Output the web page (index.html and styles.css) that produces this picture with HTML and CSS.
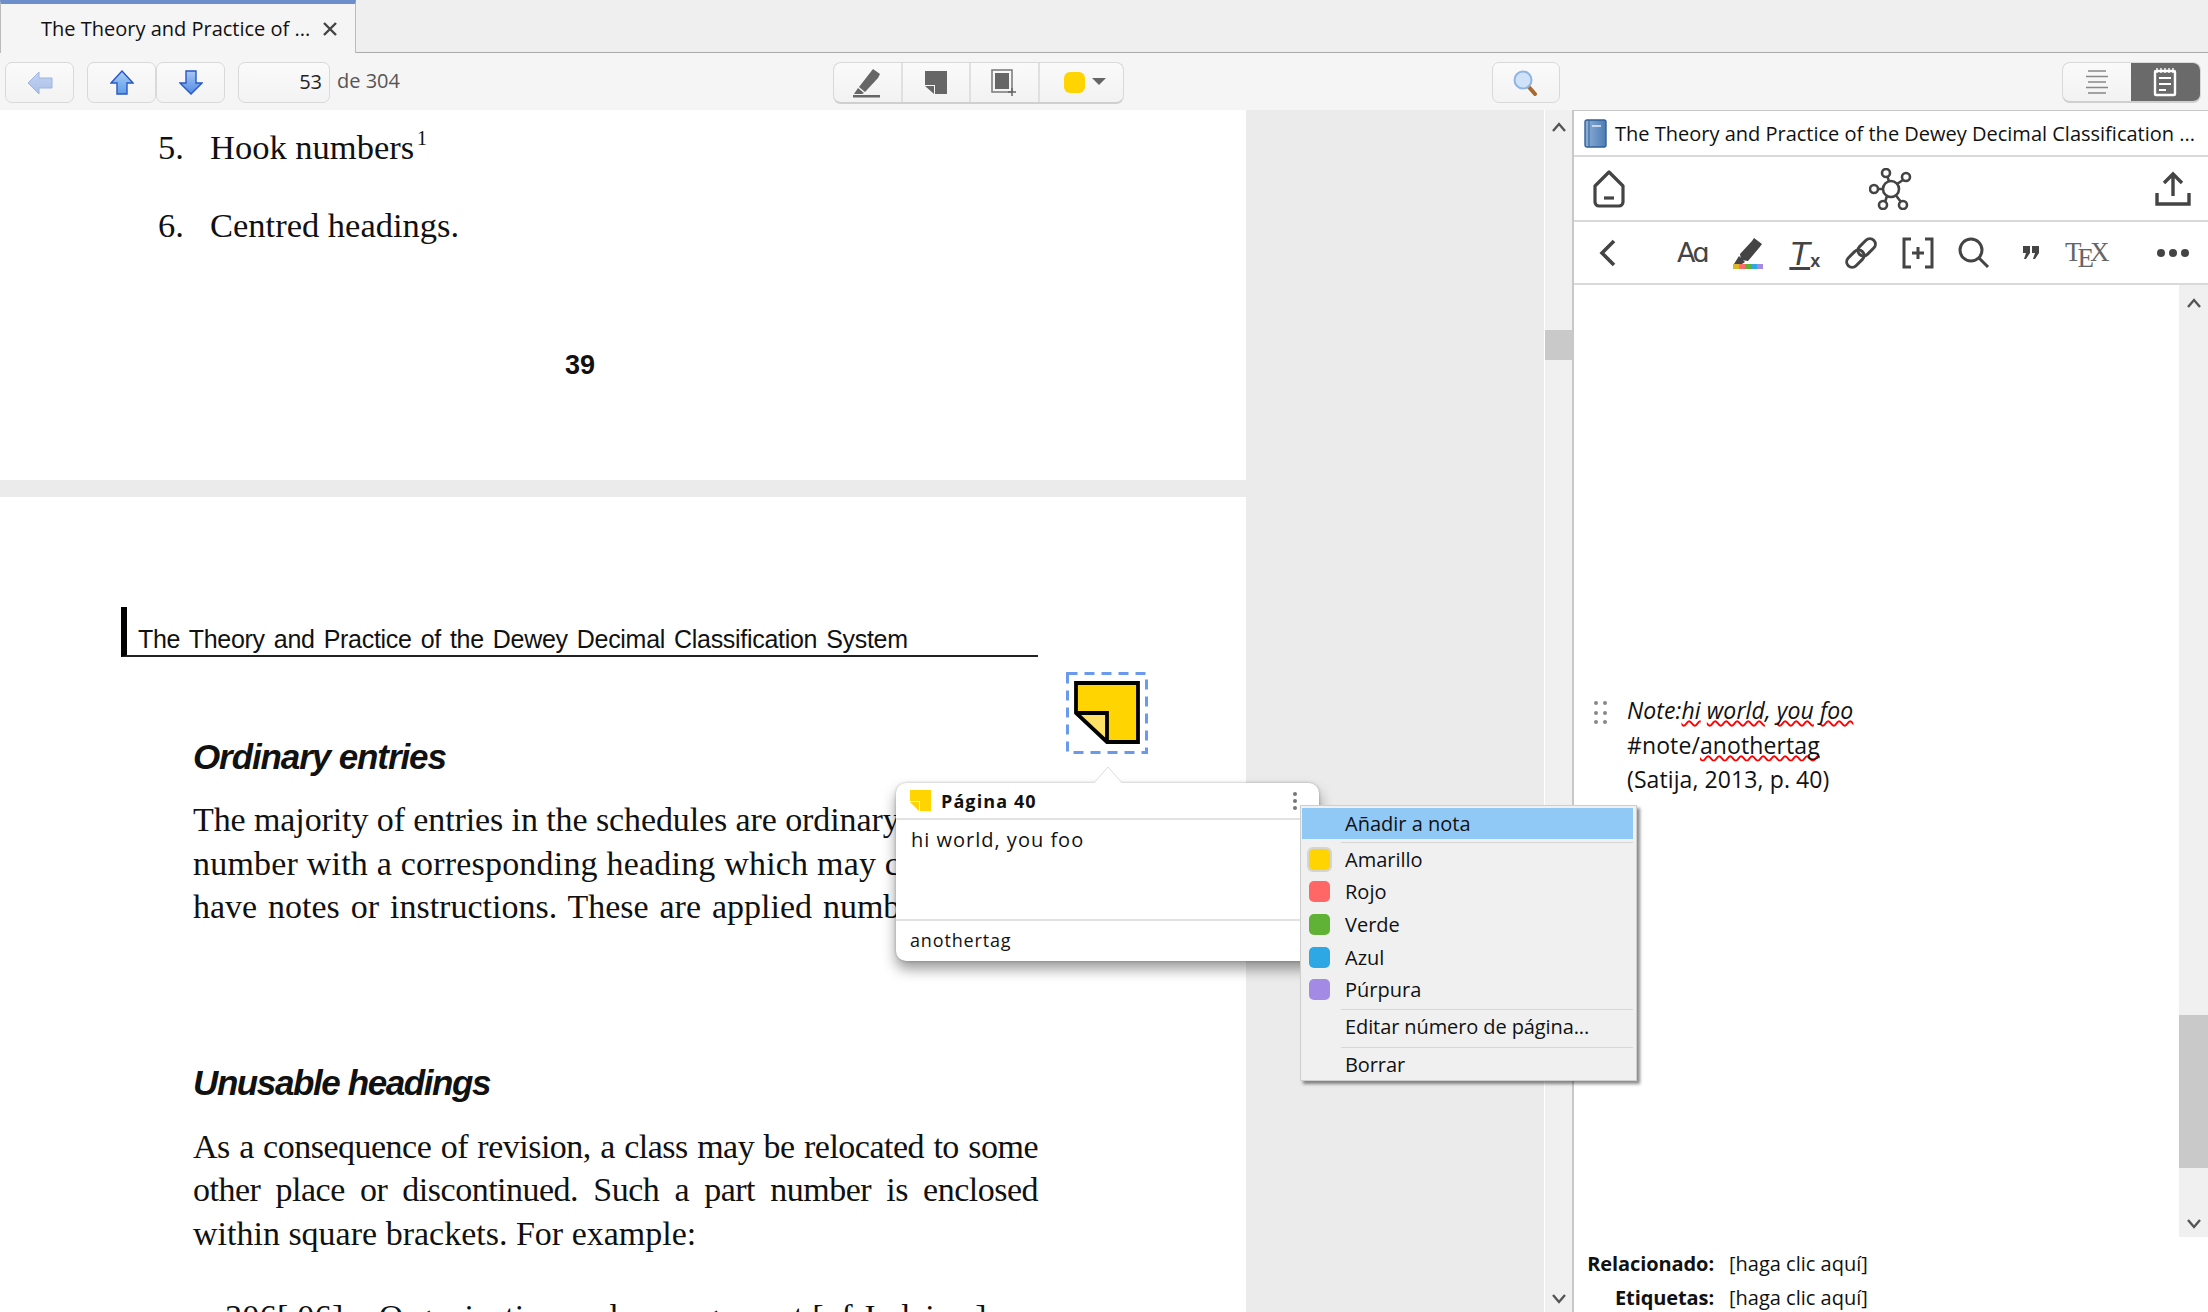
FILE: index.html
```html
<!DOCTYPE html>
<html lang="es">
<head>
    <meta charset="UTF-8">
    <title>The Theory and Practice of the Dewey Decimal Classification System</title>
    <link rel="stylesheet" href="styles.css">
</head>
<body>

<div class="tabbar">
    <div class="tab">
        <span class="tab-title">The Theory and Practice of ...</span>
        <svg class="tab-close" width="16" height="16" viewBox="0 0 16 16"><path d="M2 2l12 12M14 2L2 14" stroke="#444" stroke-width="2.4" fill="none"/></svg>
    </div>
</div>

<div class="toolbar">
    <div class="tool-btn tool-back">
        <svg width="26" height="24" viewBox="0 0 26 24">
            <defs><linearGradient id="paleBlue" x1="0" y1="0" x2="0" y2="1"><stop offset="0" stop-color="#c4d4f2"/><stop offset="1" stop-color="#a9c0ea"/></linearGradient></defs>
            <path d="M1 12L12 1v6h13v10H12v6z" fill="url(#paleBlue)" stroke="#9db4e0"/>
        </svg>
    </div>
    <div class="tool-btn tool-up">
        <svg width="24" height="25" viewBox="0 0 24 25">
            <defs><linearGradient id="upBlue" x1="0" y1="0" x2="0" y2="1"><stop offset="0" stop-color="#a8cdf5"/><stop offset="1" stop-color="#5f9de8"/></linearGradient></defs>
            <path d="M12 1l11 12h-6v11H7V13H1z" fill="url(#upBlue)" stroke="#2a57c4" stroke-width="1.4"/>
        </svg>
    </div>
    <div class="tool-btn">
        <svg width="24" height="25" viewBox="0 0 24 25">
            <defs><linearGradient id="downBlue" x1="0" y1="0" x2="0" y2="1"><stop offset="0" stop-color="#a8c8f2"/><stop offset="1" stop-color="#4f8ae6"/></linearGradient></defs>
            <path d="M7 1h10v12h6L12 24 1 13h6z" fill="url(#downBlue)" stroke="#2a57c4" stroke-width="1.4"/>
        </svg>
    </div>
    <div class="tool-btn page-input">53</div>
    <span class="page-count">de 304</span>

    <div class="tool-group">
        <div class="group-cell cell-pen">
            <svg width="28" height="30" viewBox="0 0 28 30">
                <path d="M20 1l7 5-2 4-13 14-6-5L20 1z" fill="#666"/>
                <path d="M5 20l6 5-2 1H1z" fill="#666"/>
                <rect x="0" y="27" width="27" height="2.500" fill="#666"/>
            </svg>
        </div>
        <div class="group-cell cell-note">
            <svg width="22" height="23" viewBox="0 0 22 23">
                <path d="M0 0h22v23H10v-9H0z" fill="#666"/>
                <path d="M0 15h9v8z" fill="#666"/>
            </svg>
        </div>
        <div class="group-cell cell-area">
            <svg width="26" height="27" viewBox="0 0 26 27">
                <rect x="1" y="1" width="20" height="22" fill="none" stroke="#777" stroke-width="1.5"/>
                <rect x="4" y="4" width="14" height="16" fill="#666"/>
                <path d="M21 19v8M17 23h8" stroke="#666" stroke-width="1.5"/>
            </svg>
        </div>
        <div class="group-cell cell-color">
            <span class="color-chip"></span>
            <span class="caret"></span>
        </div>
    </div>

    <div class="tool-btn tool-search">
        <svg width="26" height="26" viewBox="0 0 26 26">
            <path d="M15 16l7 8" stroke="#a8692f" stroke-width="4" stroke-linecap="round"/>
            <circle cx="10" cy="10" r="8.500" fill="#cfe2f8" stroke="#8fb4e4" stroke-width="2"/>
        </svg>
    </div>

    <div class="view-toggle">
        <div class="toggle-half">
            <svg width="22" height="26" viewBox="0 0 22 26"><path d="M2 2h18M0 7.500h22M2 13h18M0 18.500h22M2 24h18" stroke="#888" stroke-width="1.600"/></svg>
        </div>
        <div class="toggle-half toggle-on">
            <svg width="24" height="30" viewBox="0 0 24 30">
                <rect x="2" y="4" width="20" height="24" fill="none" stroke="#fff" stroke-width="2.400" rx="1"/>
                <path d="M4 1v5M8 1v5M12 1v5M16 1v5M20 1v5" stroke="#fff" stroke-width="1.400"/>
                <path d="M6 11h12M6 17h12M6 23h7" stroke="#fff" stroke-width="2"/>
            </svg>
        </div>
    </div>
</div>

<div class="main">
    <div class="viewer">
        <div class="page page-one">
            <div class="list-item"><span class="list-num">5.</span><span>Hook numbers<sup class="foot">1</sup></span></div>
            <div class="list-item item-gap"><span class="list-num">6.</span><span>Centred headings.</span></div>
            <div class="page-number">39</div>
        </div>
        <div class="page page-two">
            <div class="running-head">The Theory and Practice of the Dewey Decimal Classification System</div>
            <h2 class="section-title first-title">Ordinary entries</h2>
            <div class="para">
                <div class="line line-cut line-one">The majority of entries in the schedules are ordinary</div>
                <div class="line line-cut line-two">number with a corresponding heading which may c</div>
                <div class="line line-cut line-three">have notes or instructions. These are applied numb</div>
            </div>
            <h2 class="section-title second-title">Unusable headings</h2>
            <div class="para">
                <div class="line line-full">As a consequence of revision, a class may be relocated to some</div>
                <div class="line line-full">other place or discontinued. Such a part number is enclosed</div>
                <div class="line">within square brackets. For example:</div>
            </div>
            <div class="line example-line">306[.06]&nbsp;&nbsp;&nbsp;&nbsp;Organization and management [of Judaism]</div>
        </div>

        <div class="annotation">
            <svg width="82" height="82" viewBox="0 0 82 82">
                <rect x="1.500" y="1.500" width="79" height="79" fill="none" stroke="#6a9aee" stroke-width="3" stroke-dasharray="10 7"/>
                <path d="M10 11h62v59H41V41H10z" fill="#ffd400"/>
                <path d="M10 41h31v29z" fill="#ffe066"/>
                <path d="M10 11h62v59H41L10 41z M10 41h31v29" fill="none" stroke="#000" stroke-width="3.800"/>
            </svg>
        </div>

        <svg class="popup-arrow" width="30" height="18" viewBox="0 0 30 18"><path d="M1 17L15 1l14 16" fill="#fff" stroke="#ddd"/></svg>
        <div class="popup">
            <div class="popup-head">
                <svg width="21" height="21" viewBox="0 0 21 21"><path d="M0 0h21v21H10V11H0z" fill="#ffd400"/><path d="M0 12h9v9z" fill="#ffd400"/></svg>
                <span class="popup-page">Página 40</span>
                <span class="kebab"><i></i><i></i><i></i></span>
            </div>
            <div class="popup-body">hi world, you foo</div>
            <div class="popup-tags">anothertag</div>
        </div>

        <div class="ctx-menu">
            <div class="ctx-item ctx-active">Añadir a nota</div>
            <div class="ctx-sep"></div>
            <div class="ctx-item ctx-color"><span class="swatch-ring"><span class="swatch swatch-yellow"></span></span>Amarillo</div>
            <div class="ctx-item ctx-color"><span class="swatch-ring plain"><span class="swatch swatch-red"></span></span>Rojo</div>
            <div class="ctx-item ctx-color"><span class="swatch-ring plain"><span class="swatch swatch-green"></span></span>Verde</div>
            <div class="ctx-item ctx-color"><span class="swatch-ring plain"><span class="swatch swatch-blue"></span></span>Azul</div>
            <div class="ctx-item ctx-color"><span class="swatch-ring plain"><span class="swatch swatch-purple"></span></span>Púrpura</div>
            <div class="ctx-sep"></div>
            <div class="ctx-item ctx-plain">Editar número de página...</div>
            <div class="ctx-sep"></div>
            <div class="ctx-item ctx-plain">Borrar</div>
        </div>
    </div>

    <div class="scrollbar viewer-scroll">
        <svg class="scroll-arrow" width="14" height="10" viewBox="0 0 14 10"><path d="M1 9l6-7 6 7" fill="none" stroke="#555" stroke-width="2.400"/></svg>
        <div class="thumb thumb-viewer"></div>
        <svg class="scroll-arrow arrow-end" width="14" height="10" viewBox="0 0 14 10"><path d="M1 1l6 7 6-7" fill="none" stroke="#555" stroke-width="2.400"/></svg>
    </div>

    <div class="side">
        <div class="side-title">
            <svg width="23" height="29" viewBox="0 0 23 29">
                <defs><linearGradient id="bookBlue" x1="0" y1="0" x2="1" y2="0"><stop offset="0" stop-color="#8fb0d8"/><stop offset="1" stop-color="#4c7cb4"/></linearGradient></defs>
                <rect x="1" y="1" width="21" height="27" rx="2" fill="url(#bookBlue)" stroke="#2f5f98" stroke-width="1.400"/>
                <path d="M5 1v27" stroke="#3c6ca6" stroke-width="1.200"/>
                <path d="M8 7h9" stroke="#dce8f6" stroke-width="1.600"/>
            </svg>
            <span class="side-name">The Theory and Practice of the Dewey Decimal Classification ...</span>
        </div>
        <div class="side-row">
            <svg width="36" height="38" viewBox="0 0 36 38"><path d="M18 2l14 14v16a4 4 0 0 1-4 4H8a4 4 0 0 1-4-4V16z" fill="none" stroke="#444" stroke-width="3.200" stroke-linejoin="round"/><path d="M13 28h10" stroke="#444" stroke-width="3.200"/></svg>
            <svg width="44" height="42" viewBox="0 0 44 42" fill="none" stroke="#444" stroke-width="2.600">
                <circle cx="22" cy="21" r="8"/>
                <circle cx="17" cy="5" r="4"/><circle cx="37" cy="9" r="4"/><circle cx="5" cy="21" r="4"/><circle cx="14" cy="37" r="4"/><circle cx="34" cy="37" r="4"/>
                <path d="M18.500 8.500l1.500 5M34 12l-6 4M9 21h5M16 34l2-6M32 34l-5-6.500"/>
            </svg>
            <svg width="36" height="36" viewBox="0 0 36 36" fill="none" stroke="#444" stroke-width="3.400"><path d="M18 25V4M9 12l9-9 9 9"/><path d="M2 22v11h32V22"/></svg>
        </div>
        <div class="side-row format-row">
            <span class="fmt fmt-back"><svg width="18" height="28" viewBox="0 0 18 28"><path d="M15 2L3 14l12 12" fill="none" stroke="#444" stroke-width="3.600"/></svg></span>
            <span class="fmt fmt-aa">Aɑ</span>
            <span class="fmt">
                <svg width="34" height="32" viewBox="0 0 34 32">
                    <path d="M23 1l8 6-3 4-11 13-7-1-1-6L21 4z" fill="#444"/>
                    <path d="M8 19l6 6-3 2H3z" fill="#444"/>
                    <rect x="2" y="27" width="6" height="5" fill="#dcb72c"/><rect x="8" y="27" width="6" height="5" fill="#ff6b6b"/><rect x="14" y="27" width="6" height="5" fill="#5fb236"/><rect x="20" y="27" width="6" height="5" fill="#2ea8e5"/><rect x="26" y="27" width="6" height="5" fill="#a28ae5"/>
                </svg>
            </span>
            <span class="fmt fmt-clear"><span class="clear-t">T</span><span class="clear-x">x</span></span>
            <span class="fmt">
                <svg width="34" height="34" viewBox="0 0 34 34" fill="none" stroke="#444" stroke-width="3">
                    <g transform="rotate(-45 17 17)">
                        <rect x="-1" y="11.500" width="20" height="11" rx="5.500"/>
                        <rect x="15" y="11.500" width="20" height="11" rx="5.500"/>
                    </g>
                </svg>
            </span>
            <span class="fmt"><svg width="32" height="32" viewBox="0 0 32 32" fill="none" stroke="#444" stroke-width="3"><path d="M9 2H2v28h7M23 2h7v28h-7"/><path d="M16 10v12M10 16h12"/></svg></span>
            <span class="fmt"><svg width="32" height="32" viewBox="0 0 32 32" fill="none" stroke="#444" stroke-width="3"><circle cx="13" cy="13" r="11"/><path d="M21 21l9 9"/></svg></span>
            <span class="fmt"><svg width="16" height="13" viewBox="0 0 16 13" fill="#444"><path d="M0 0h7v7L3 13H1l2-6H0zM9 0h7v7l-4 6h-2l2-6H9z"/></svg></span>
            <span class="fmt fmt-tex">T<span class="tex-e">E</span>X</span>
            <span class="fmt fmt-more"><i></i><i></i><i></i></span>
        </div>
        <div class="note-area">
            <div class="note-scroll">
                <svg class="scroll-arrow" width="14" height="10" viewBox="0 0 14 10"><path d="M1 9l6-7 6 7" fill="none" stroke="#555" stroke-width="2.400"/></svg>
                <div class="thumb thumb-note"></div>
                <svg class="scroll-arrow arrow-end" width="14" height="10" viewBox="0 0 14 10"><path d="M1 1l6 7 6-7" fill="none" stroke="#555" stroke-width="2.400"/></svg>
            </div>
            <div class="note-content">
                <div class="drag-handle"><i></i><i></i><i></i><i></i><i></i><i></i></div>
                <div class="note-text">
                    <div class="note-line"><em>Note:<span class="misspelled">hi</span> <span class="misspelled">world</span>, <span class="misspelled">you</span> <span class="misspelled">foo</span></em></div>
                    <div class="note-line">#note/<span class="misspelled">anothertag</span></div>
                    <div class="note-line">(Satija, 2013, p. 40)</div>
                </div>
            </div>
        </div>
        <div class="meta">
            <div class="meta-row"><span class="meta-label">Relacionado:</span><span class="meta-value">[haga clic aquí]</span></div>
            <div class="meta-row"><span class="meta-label">Etiquetas:</span><span class="meta-value">[haga clic aquí]</span></div>
        </div>
    </div>
</div>

</body>
</html>
```

FILE: styles.css
```css
* {
    box-sizing: border-box;
}

html, body {
    margin: 0;
    padding: 0;
}

body {
    width: 2208px;
    height: 1312px;
    overflow: hidden;
    display: flex;
    flex-direction: column;
    background-color: #f5f5f5;
    font-family: 'Open Sans', sans-serif;
    font-size: 20px;
    color: #111;
}

/* tab strip */
.tabbar {
    height: 53px;
    flex: none;
    background-color: #efefef;
    border-bottom: 1px solid #aaa;
    display: flex;
}

.tab {
    width: 356px;
    height: 53px;
    background-color: #f5f5f5;
    border-top: 4px solid #6c8fcb;
    border-left: 1px solid #bbb;
    border-right: 1px solid #bbb;
    display: flex;
    align-items: center;
    padding-left: 40px;
}

.tab-title {
    width: 281px;
    white-space: nowrap;
}

/* toolbar */
.toolbar {
    height: 57px;
    flex: none;
    background-color: #f5f5f5;
    display: flex;
    align-items: flex-start;
    padding-top: 9px;
    padding-left: 5px;
}

.tool-btn {
    width: 69px;
    height: 41px;
    background: linear-gradient(#fafafa, #f3f3f3);
    border: 1px solid #d9d9d9;
    border-radius: 7px;
    display: flex;
    align-items: center;
    justify-content: center;
}

.tool-up {
    margin-left: 13px;
}

.page-input {
    width: 92px;
    margin-left: 13px;
    justify-content: flex-end;
    padding-right: 7px;
    padding-bottom: 3px;
    color: #222;
}

.page-count {
    margin-left: 7px;
    line-height: 38px;
    color: #555;
}

.tool-group {
    margin-left: 433px;
    width: 291px;
    height: 42px;
    display: flex;
    background: linear-gradient(#fafafa, #f2f2f2);
    border: 1px solid #d9d9d9;
    border-bottom: 2px solid #cfcfcf;
    border-radius: 8px;
}

.group-cell {
    display: flex;
    align-items: center;
    justify-content: center;
    border-right: 2px solid #e0e0e0;
}

.cell-pen { width: 69px; }
.cell-note { width: 68px; }
.cell-area { width: 69px; }

.cell-color {
    flex: 1;
    border-right: none;
    gap: 7px;
    padding-left: 8px;
}

.color-chip {
    width: 21px;
    height: 21px;
    background-color: #ffd400;
    border-radius: 6px;
}

.caret {
    width: 0;
    height: 0;
    border-left: 7px solid transparent;
    border-right: 7px solid transparent;
    border-top: 7px solid #666;
    margin-top: -3px;
}

.tool-search {
    margin-left: 368px;
    width: 68px;
}

.view-toggle {
    margin-left: 502px;
    width: 139px;
    height: 41px;
    display: flex;
    border: 1px solid #d9d9d9;
    border-bottom: 2px solid #cfcfcf;
    border-radius: 8px;
    overflow: hidden;
    background: linear-gradient(#fafafa, #f2f2f2);
}

.toggle-half {
    width: 68px;
    display: flex;
    align-items: center;
    justify-content: center;
}

.toggle-on {
    flex: 1;
    background-color: #6a6a6a;
}

/* main area */
.main {
    flex: 1;
    display: flex;
    min-height: 0;
}

.viewer {
    position: relative;
    z-index: 5;
    width: 1544px;
    flex: none;
    background-color: #ebebeb;
}

.page {
    width: 1246px;
    background-color: #fff;
    color: #111;
    font-family: 'Liberation Serif', serif;
}

.page-one {
    height: 370px;
    padding-top: 15px;
    padding-left: 158px;
}

.list-item {
    font-size: 34.5px;
    line-height: 44px;
    height: 44px;
    display: flex;
    align-items: baseline;
}

.item-gap {
    margin-top: 34px;
}

.list-num {
    width: 52px;
}

.foot {
    font-size: 20px;
    line-height: 0;
    margin-left: 3px;
    vertical-align: 14px;
}

.page-number {
    margin-top: 100px;
    margin-left: 407px;
    font-family: 'Liberation Sans', sans-serif;
    font-weight: bold;
    font-size: 27px;
    line-height: 36px;
}

.page-two {
    margin-top: 17px;
    height: 815px;
    padding-top: 110px;
    padding-left: 193px;
}

.running-head {
    margin-left: -72px;
    width: 917px;
    height: 50px;
    border-left: 6px solid #000;
    border-bottom: 2px solid #222;
    padding-left: 11px;
    padding-top: 16px;
    font-family: 'Liberation Sans', sans-serif;
    font-size: 25px;
    line-height: 32px;
    letter-spacing: -0.3px;
    word-spacing: 2.4px;
    white-space: nowrap;
}

.section-title {
    margin: 0;
    font-family: 'Liberation Sans', sans-serif;
    font-size: 35px;
    font-style: italic;
    font-weight: bold;
    line-height: 40px;
    letter-spacing: -1.1px;
}

.first-title { margin-top: 80px; margin-bottom: 21px; }
.second-title { margin-top: 134px; margin-bottom: 22px; letter-spacing: -1.4px; }

.line {
    font-size: 34px;
    line-height: 43.6px;
    white-space: nowrap;
    width: 845px;
}

/* these run under the popup, only the part left of it shows */
.line-cut {
    width: 703px;
    overflow: hidden;
}

.line-one { letter-spacing: -0.1px; }
.line-two { letter-spacing: 0.2px; }
.line-three { word-spacing: 2.4px; }

.line-full {
    letter-spacing: -0.5px;
    text-align: justify;
    text-align-last: justify;
    white-space: normal;
}

.example-line {
    margin-top: 39px;
    margin-left: 32px;
    letter-spacing: 0.3px;
}

/* note marker on the page */
.annotation {
    position: absolute;
    left: 1066px;
    top: 562px;
    width: 82px;
    height: 82px;
}

.popup-arrow {
    position: absolute;
    left: 1093px;
    top: 656px;
    z-index: 3;
}

.popup {
    position: absolute;
    left: 896px;
    top: 673px;
    width: 423px;
    height: 178px;
    background-color: #fff;
    border-radius: 10px;
    box-shadow: 0 8px 14px rgba(0, 0, 0, 0.4), 0 0 3px rgba(0, 0, 0, 0.25);
    display: flex;
    flex-direction: column;
    z-index: 2;
}

.popup-head {
    height: 37px;
    border-bottom: 2px solid #e2e2e2;
    display: flex;
    align-items: center;
    padding: 0 14px;
    gap: 10px;
}

.popup-page {
    flex: 1;
    font-weight: bold;
    font-size: 18px;
    letter-spacing: 1.1px;
}

.kebab {
    display: flex;
    flex-direction: column;
    gap: 3px;
    margin-right: 8px;
}

.kebab i {
    width: 4px;
    height: 4px;
    background-color: #777;
    border-radius: 50%;
}

.popup-body {
    height: 99px;
    padding: 6px 15px;
    font-size: 20px;
    letter-spacing: 1px;
}

.popup-tags {
    flex: 1;
    border-top: 2px solid #e2e2e2;
    padding: 7px 14px;
    font-size: 18px;
    letter-spacing: 0.85px;
}

/* context menu */
.ctx-menu {
    position: absolute;
    left: 1300px;
    top: 695px;
    width: 337px;
    height: 276px;
    background-color: #f0f0f0;
    border: 1px solid #cfcfcf;
    box-shadow: 3px 3px 3px rgba(0, 0, 0, 0.45);
    padding: 2px 3px 0 1px;
    z-index: 4;
}

.ctx-item {
    display: flex;
    align-items: center;
    white-space: nowrap;
}

.ctx-active {
    height: 31px;
    background-color: #90c8f6;
    padding-left: 43px;
}

.ctx-sep {
    height: 1px;
    margin: 3px 0 0 39px;
    background-color: #d7d7d7;
}

.ctx-color {
    height: 32.6px;
    padding-left: 5px;
}

.ctx-plain {
    height: 34px;
    padding-left: 43px;
    letter-spacing: -0.1px;
}

.swatch-ring {
    width: 25px;
    height: 25px;
    margin-right: 13px;
    background-color: #d4d4d4;
    border-radius: 6px;
    display: flex;
    align-items: center;
    justify-content: center;
}

.swatch-ring.plain {
    background-color: transparent;
}

.swatch {
    width: 21px;
    height: 21px;
    border-radius: 5px;
}

.swatch-yellow { background-color: #ffd400; }
.swatch-red { background-color: #ff6666; }
.swatch-green { background-color: #5fb236; }
.swatch-blue { background-color: #2ea8e5; }
.swatch-purple { background-color: #a28ae5; }

/* scrollbars */
.scrollbar {
    width: 28px;
    flex: none;
    background-color: #f0f0f0;
    border-left: 1px solid #fff;
    display: flex;
    flex-direction: column;
    align-items: center;
    padding-top: 12px;
    padding-bottom: 8px;
}

.thumb {
    width: 100%;
    background-color: #c9c9c9;
}

.thumb-viewer {
    height: 30px;
    margin-top: 198px;
}

.arrow-end {
    margin-top: auto;
}

/* right pane */
.side {
    flex: 1;
    display: flex;
    flex-direction: column;
    background-color: #fff;
    border-left: 2px solid #c8c8c8;
    border-top: 1px solid #c8c8c8;
    min-width: 0;
}

.side-title {
    height: 46px;
    flex: none;
    border-bottom: 2px solid #d9d9d9;
    display: flex;
    align-items: center;
    padding-left: 10px;
    gap: 8px;
}

.side-name {
    white-space: nowrap;
}

.side-row {
    height: 65px;
    flex: none;
    border-bottom: 2px solid #d9d9d9;
    display: flex;
    align-items: center;
    justify-content: space-between;
    padding: 0 17px 0 17px;
}

.format-row {
    height: 63px;
    justify-content: flex-start;
    padding: 0;
}

.fmt {
    width: 56.5px;
    display: flex;
    align-items: center;
    justify-content: center;
    color: #444;
}

.fmt-back {
    margin-left: 6px;
    margin-right: 27px;
}

.fmt-aa {
    font-family: 'DejaVu Sans', sans-serif;
    font-size: 27px;
    letter-spacing: -3px;
}

.fmt-clear {
    align-items: flex-end;
    font-family: 'Liberation Sans', sans-serif;
}

.clear-t {
    font-size: 34px;
    line-height: 36px;
    font-style: italic;
    text-decoration: underline;
    text-decoration-thickness: 3px;
}

.clear-x {
    font-size: 18px;
    font-weight: bold;
    line-height: 20px;
}

.fmt-tex {
    font-family: 'Liberation Serif', serif;
    font-size: 27px;
    color: #666;
    align-items: baseline;
}

.tex-e {
    margin: 0 -4px;
    transform: translateY(6px);
}

.fmt-more {
    margin-left: auto;
    margin-right: 7px;
    gap: 4px;
}

.fmt-more i {
    width: 8px;
    height: 8px;
    background-color: #444;
    border-radius: 50%;
}

.note-area {
    height: 952px;
    flex: none;
    display: flex;
    flex-direction: row-reverse;
}

.note-scroll {
    width: 29px;
    background-color: #f0f0f0;
    display: flex;
    flex-direction: column;
    align-items: center;
    padding-top: 13px;
    padding-bottom: 8px;
}

.thumb-note {
    height: 153px;
    margin-top: 707px;
}

.note-scroll .arrow-end {
    margin-top: auto;
}

.note-content {
    flex: 1;
    display: flex;
    padding-top: 408px;
    padding-left: 20px;
}

.drag-handle {
    width: 14px;
    height: 24px;
    margin-top: 8px;
    margin-right: 19px;
    display: grid;
    grid-template-columns: 4px 4px;
    column-gap: 5px;
    row-gap: 5px;
}

.drag-handle i {
    width: 4px;
    height: 4px;
    background-color: #888;
    border-radius: 50%;
}

.note-line {
    font-size: 23px;
    line-height: 34.5px;
    letter-spacing: 0.1px;
    white-space: nowrap;
}

.misspelled {
    text-decoration: underline wavy #f00;
    text-decoration-skip-ink: none;
    text-decoration-thickness: 2px;
}

.meta {
    flex: none;
    padding-top: 9px;
}

.meta-row {
    display: flex;
    height: 34px;
    align-items: center;
    white-space: nowrap;
}

.meta-label {
    width: 140px;
    text-align: right;
    font-weight: bold;
    letter-spacing: -0.1px;
}

.meta-value {
    margin-left: 15px;
}
```
